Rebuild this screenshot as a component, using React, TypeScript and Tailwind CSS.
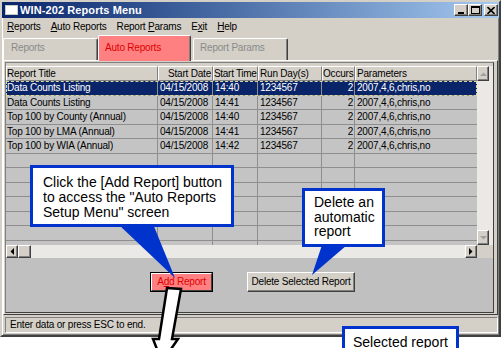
import React from "react";

type Row = { t: string; d: string; tm: string; r: string; o: string; p: string; sel?: boolean };

const rows: Row[] = [
  { t: "Data Counts Listing", d: "04/15/2008", tm: "14:40", r: "1234567", o: "2", p: "2007,4,6,chris,no", sel: true },
  { t: "Data Counts Listing", d: "04/15/2008", tm: "14:41", r: "1234567", o: "2", p: "2007,4,6,chris,no" },
  { t: "Top 100 by County (Annual)", d: "04/15/2008", tm: "14:40", r: "1234567", o: "2", p: "2007,4,6,chris,no" },
  { t: "Top 100 by LMA (Annual)", d: "04/15/2008", tm: "14:41", r: "1234567", o: "2", p: "2007,4,6,chris,no" },
  { t: "Top 100 by WIA (Annual)", d: "04/15/2008", tm: "14:42", r: "1234567", o: "2", p: "2007,4,6,chris,no" },
  { t: "", d: "", tm: "", r: "", o: "", p: "" },
  { t: "", d: "", tm: "", r: "", o: "", p: "" },
  { t: "", d: "", tm: "", r: "", o: "", p: "" },
  { t: "", d: "", tm: "", r: "", o: "", p: "" },
  { t: "", d: "", tm: "", r: "", o: "", p: "" },
  { t: "", d: "", tm: "", r: "", o: "", p: "" },
  { t: "", d: "", tm: "", r: "", o: "", p: "" },
];

const rowH = ["h-[15px]", "h-[14px]", "h-[15px]", "h-[14px]", "h-[15px]", "h-[14px]", "h-[15px]", "h-[14px]", "h-[15px]", "h-[14px]", "h-[15px]", "h-[14px]"];

function Tri({ dir, color }: { dir: "up" | "down" | "left" | "right"; color: string }) {
  if (dir === "up")
    return (
      <svg width="7" height="4" viewBox="0 0 7 4"><polygon points="0,4 3.5,0.5 7,4" fill={color} /></svg>
    );
  if (dir === "down")
    return (
      <svg width="7" height="4" viewBox="0 0 7 4"><polygon points="0,0 7,0 3.5,3.5" fill={color} /></svg>
    );
  if (dir === "left")
    return (
      <svg width="4" height="7" viewBox="0 0 4 7"><polygon points="4,0 4,7 0.5,3.5" fill={color} /></svg>
    );
  return (
    <svg width="4" height="7" viewBox="0 0 4 7"><polygon points="0,0 0,7 3.5,3.5" fill={color} /></svg>
  );
}

function TBtn({ children }: { children: React.ReactNode }) {
  return (
    <div className="w-[14px] h-[12px] bg-[#d4d0c8] border border-t-white border-l-white border-r-[#404040] border-b-[#404040] shadow-[inset_-1px_-1px_0_#808080] flex items-center justify-center">
      {children}
    </div>
  );
}

export default function App() {
  return (
    <div className="relative w-[503px] h-[348px] overflow-hidden bg-white font-['Liberation_Sans',Arial,sans-serif] text-[10px] tracking-[-0.2px] text-black">
      <div className="w-[501px] flex flex-col bg-[#d4d0c8] border-2 border-t-[#d4d0c8] border-l-[#d4d0c8] border-r-[#404040] border-b-[#404040] shadow-[inset_1px_1px_0_#ffffff,inset_-1px_-1px_0_#808080]">
        {/* Title bar */}
        <div className="h-[16px] flex items-center bg-linear-to-r from-[#0a246a] to-[#a6caf0] pl-[3px] pr-[1px]">
          <div className="w-[13px] h-[10px] bg-white border border-[#c8c8c8]" />
          <span className="ml-[2px] text-white font-bold text-[11px] tracking-[0.1px] leading-none">WIN-202 Reports Menu</span>
          <div className="ml-auto flex items-center">
            <TBtn>
              <svg width="6" height="7" viewBox="0 0 6 7"><rect x="0" y="5" width="6" height="2" fill="#000" /></svg>
            </TBtn>
            <TBtn>
              <svg width="9" height="8" viewBox="0 0 9 8"><rect x="0.5" y="0.5" width="8" height="7" fill="none" stroke="#000" /><rect x="0" y="0" width="9" height="2" fill="#000" /></svg>
            </TBtn>
            <div className="w-[2px]" />
            <TBtn>
              <svg width="8" height="7" viewBox="0 0 8 7"><path d="M0.5 0 L7.5 7 M7.5 0 L0.5 7" stroke="#000" strokeWidth="1.6" /></svg>
            </TBtn>
          </div>
        </div>

        {/* Menu bar */}
        <div className="h-[17px] flex items-center gap-[10px] pl-[5px] leading-none">
          <span><span className="underline">R</span>eports</span>
          <span><span className="underline">A</span>uto Reports</span>
          <span>Report <span className="underline">P</span>arams</span>
          <span>E<span className="underline">x</span>it</span>
          <span><span className="underline">H</span>elp</span>
        </div>

        {/* Tabs */}
        <div className="h-[25px] flex items-end pl-[1px] leading-[12px]">
          <div className="w-[95px] h-[22px] bg-[#d4d0c8] border-t border-l border-r border-t-white border-l-white border-r-[#404040] rounded-t-[2px] shadow-[inset_-1px_0_0_#808080] pl-[7px] pt-[3px] text-[#8a8a8a]">
            Reports
          </div>
          <div className="relative z-10 -mb-[1px] w-[93px] h-[26px] bg-[#ff8080] border-t border-l border-r border-t-white border-l-white border-r-[#404040] rounded-t-[2px] shadow-[inset_-1px_0_0_#808080] pl-[6px] pt-[6px] text-[#e00000]">
            Auto Reports
          </div>
          <div className="ml-[2px] w-[95px] h-[22px] bg-[#d4d0c8] border-t border-l border-r border-t-white border-l-white border-r-[#404040] rounded-t-[2px] shadow-[inset_-1px_0_0_#808080] pl-[6px] pt-[3px] text-[#8a8a8a]">
            Report Params
          </div>
        </div>

        {/* Tab page */}
        <div className="ml-[1px] mr-[1px] h-[255px] flex border border-t-white border-l-white border-r-[#404040] border-b-[#404040] pl-[1px] pr-[3px] py-[1px]">
          <div className="flex-1 flex flex-col border border-t-[#808080] border-l-[#808080] border-r-[#404040] border-b-[#404040] bg-[#c0c0c0]">
            <div className="h-[3px] bg-[#d4d0c8]" />
            <div className="h-[179px] flex">
              <div className="flex-1 flex flex-col overflow-hidden bg-[#c4c4c4] leading-none whitespace-nowrap">
                {/* Header */}
                <div className="h-[15px] shrink-0 flex bg-[#d4d0c8]">
                  <div className="w-[152px] shrink-0 border border-t-white border-l-white border-r-[#808080] border-b-[#808080] flex items-center pl-[0px]">Report Title</div>
                  <div className="w-[55px] shrink-0 border border-t-white border-l-white border-r-[#808080] border-b-[#808080] flex items-center justify-end pr-[1px]">Start Date</div>
                  <div className="w-[45px] shrink-0 border border-t-white border-l-white border-r-[#808080] border-b-[#808080] flex items-center pl-[0px] overflow-hidden tracking-[-0.3px]">Start Time</div>
                  <div className="w-[64px] shrink-0 border border-t-white border-l-white border-r-[#808080] border-b-[#808080] flex items-center pl-[1px]">Run Day(s)</div>
                  <div className="w-[33px] shrink-0 border border-t-white border-l-white border-r-[#808080] border-b-[#808080] flex items-center pl-[0px] overflow-hidden">Occurs</div>
                  <div className="flex-1 border border-t-white border-l-white border-r-[#808080] border-b-[#808080] flex items-center pl-[1px]">Parameters</div>
                </div>
                {rows.map((r, i) => (
                  <div
                    key={i}
                    className={`${rowH[i]} shrink-0 flex border-b border-[#8e8e8e] ${
                      r.sel
                        ? "bg-[#0a246a] text-white outline-1 outline-dashed outline-[#d8d8a0] -outline-offset-1"
                        : "text-black"
                    }`}
                  >
                    <div className="w-[152px] shrink-0 border-r border-[#8e8e8e] flex items-center pl-[1px] overflow-hidden">{r.t}</div>
                    <div className="w-[55px] shrink-0 border-r border-[#8e8e8e] flex items-center pl-[2px] overflow-hidden">{r.d}</div>
                    <div className="w-[45px] shrink-0 border-r border-[#8e8e8e] flex items-center pl-[2px] overflow-hidden">{r.tm}</div>
                    <div className="w-[64px] shrink-0 border-r border-[#8e8e8e] flex items-center pl-[2px] overflow-hidden">{r.r}</div>
                    <div className="w-[33px] shrink-0 border-r border-[#8e8e8e] flex items-center justify-end pr-[1px] overflow-hidden">{r.o}</div>
                    <div className="flex-1 flex items-center pl-[2px] overflow-hidden">{r.p}</div>
                  </div>
                ))}
              </div>
              {/* Vertical scrollbar */}
              <div className="w-[16px] flex flex-col bg-[#ebe9e5]">
                <div className="w-[12px] h-[15px] bg-[#d4d0c8] border border-t-white border-l-white border-r-[#404040] border-b-[#404040] shadow-[inset_-1px_-1px_0_#808080] flex items-center justify-center">
                  <Tri dir="up" color="#a0a0a0" />
                </div>
                <div className="flex-1" />
                <div className="w-[12px] h-[15px] bg-[#d4d0c8] border border-t-white border-l-white border-r-[#404040] border-b-[#404040] shadow-[inset_-1px_-1px_0_#808080] flex items-center justify-center">
                  <Tri dir="down" color="#a0a0a0" />
                </div>
              </div>
            </div>
            {/* Horizontal scrollbar */}
            <div className="h-[13px] flex">
              <div className="flex-1 flex bg-[#ebe9e5]">
                <div className="w-[12px] h-[13px] bg-[#d4d0c8] border border-t-white border-l-white border-r-[#404040] border-b-[#404040] shadow-[inset_-1px_-1px_0_#808080] flex items-center justify-center">
                  <Tri dir="left" color="#000" />
                </div>
                <div className="w-[13px] h-[13px] bg-[#d4d0c8] border border-t-white border-l-white border-r-[#404040] border-b-[#404040] shadow-[inset_-1px_-1px_0_#808080]" />
                <div className="flex-1" />
                <div className="w-[12px] h-[13px] bg-[#d4d0c8] border border-t-white border-l-white border-r-[#404040] border-b-[#404040] shadow-[inset_-1px_-1px_0_#808080] flex items-center justify-center">
                  <Tri dir="right" color="#000" />
                </div>
              </div>
              <div className="w-[16px] bg-[#d4d0c8]" />
            </div>
            {/* Buttons */}
            <div className="flex-1 flex items-start pt-[14px] pl-[144px] gap-[34px] leading-none">
              <div className="w-[63px] h-[20px] flex bg-[#ff8080] border border-black">
                <div className="flex-1 flex items-center justify-center border border-t-white border-l-white border-r-[#404040] border-b-[#404040] text-[#e00000]">
                  A<span className="underline">d</span>d Report
                </div>
              </div>
              <div className="w-[108px] h-[20px] flex items-center justify-center bg-[#d4d0c8] border border-t-white border-l-white border-r-[#404040] border-b-[#404040] shadow-[inset_-1px_-1px_0_#808080]">
                Delete Selected Report
              </div>
            </div>
          </div>
        </div>

        {/* Status bar */}
        <div className="mt-[2px] ml-[3px] mr-[1px] mb-[2px] h-[16px] flex items-center pl-[4px] leading-none border border-t-[#808080] border-l-[#808080] border-r-white border-b-white">
          Enter data or press ESC to end.
        </div>
      </div>

      {/* Overlay drawings: callout pointers and arrow */}
      <svg className="absolute left-0 top-0 pointer-events-none" width="503" height="348" viewBox="0 0 503 348">
        <polygon points="118,224 153,224 175,278" fill="#0033cc" />
        <polygon points="322,245 347,245 312,275" fill="#0033cc" />
        <polygon
          points="167,288 181,289 172,339 178,339 162,362 153,339 159,339"
          fill="#ffffff"
          stroke="#000000"
          strokeWidth="2.5"
          strokeLinejoin="miter"
        />
      </svg>

      <div className="absolute left-[30px] top-[165px] w-[204px] h-[62px] bg-white border-[3px] border-[#0033cc] pl-[10px] pt-[7px] text-[14px] leading-[15px] tracking-normal text-black whitespace-nowrap">
        Click the [Add Report] button
        <br />
        to access the "Auto Reports
        <br />
        Setup Menu" screen
      </div>

      <div className="absolute left-[302px] top-[188px] w-[83px] h-[59px] bg-white border-[3px] border-[#0033cc] pl-[9px] pt-[4px] text-[14px] leading-[14.5px] tracking-normal text-black whitespace-nowrap">
        Delete an
        <br />
        automatic
        <br />
        report
      </div>

      <div className="absolute left-[342px] top-[326px] w-[117px] h-[30px] bg-white border-[3px] border-[#0033cc] pl-[8px] pt-[6px] text-[14px] leading-[15px] tracking-normal text-black whitespace-nowrap">
        Selected report
      </div>
    </div>
  );
}
